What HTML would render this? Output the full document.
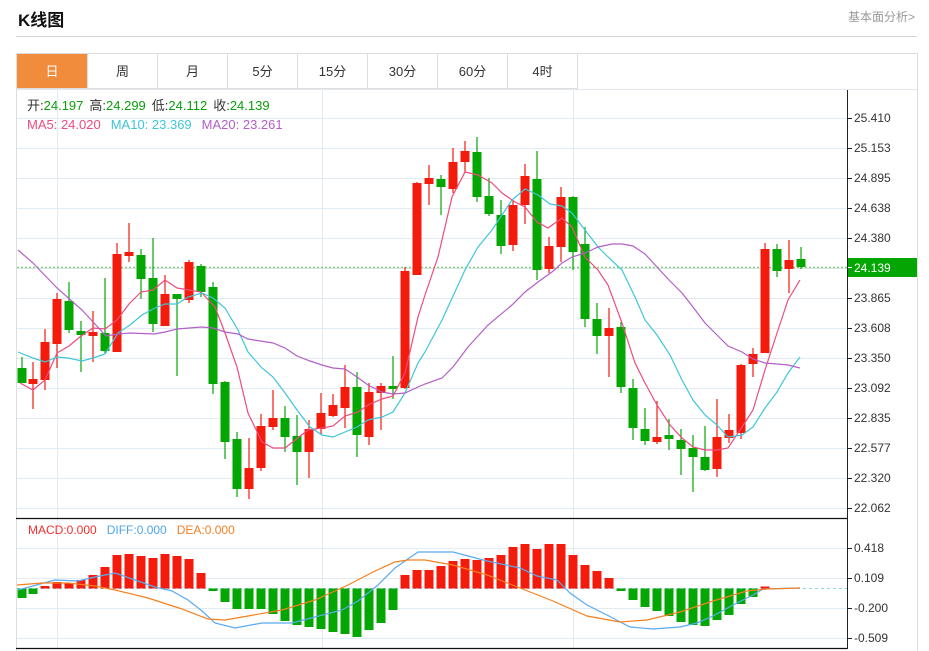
<!DOCTYPE html>
<html><head><meta charset="utf-8">
<style>
*{margin:0;padding:0;box-sizing:border-box}
body{width:929px;height:651px;background:#fff;font-family:"Liberation Sans","Noto Sans CJK SC",sans-serif;position:relative;overflow:hidden;color:#333}
.title{position:absolute;left:18px;top:6px;font-size:17px;font-weight:bold;color:#111}
.more{position:absolute;right:14px;top:8px;font-size:12px;color:#999}
.hr{position:absolute;left:16px;top:36px;width:901px;height:1px;background:#d3d3d3}
.box{position:absolute;left:16px;top:53px;width:902px;height:598px;border:1px solid #ddd;border-bottom:none}
.tab{position:absolute;top:54px;height:35px;width:70px;border-right:1px solid #ddd;border-bottom:1px solid #ddd;font-size:13px;line-height:35px;text-align:center;color:#333}
.tab.on{background:#f28c3d;color:#fff}
svg{position:absolute;left:0;top:0}
</style></head><body>
<div class="title">K线图</div>
<div class="more">基本面分析&gt;</div>
<div class="hr"></div>
<div class="box"></div>
<div class="tab on" style="left:17px;width:71px">日</div>
<div class="tab" style="left:88px">周</div>
<div class="tab" style="left:158px">月</div>
<div class="tab" style="left:228px">5分</div>
<div class="tab" style="left:298px">15分</div>
<div class="tab" style="left:368px">30分</div>
<div class="tab" style="left:438px">60分</div>
<div class="tab" style="left:508px">4时</div>
<div style="position:absolute;left:17px;top:89px;width:900px;height:1px;background:#e2e8ee"></div>
<svg width="929" height="651" xmlns="http://www.w3.org/2000/svg" font-family="Liberation Sans, Noto Sans CJK SC, sans-serif">
<g stroke="#e3ebf2" stroke-width="1">
<line x1="17" y1="118.5" x2="847" y2="118.5"/><line x1="17" y1="148.5" x2="847" y2="148.5"/><line x1="17" y1="178.5" x2="847" y2="178.5"/><line x1="17" y1="208.5" x2="847" y2="208.5"/><line x1="17" y1="238.5" x2="847" y2="238.5"/><line x1="17" y1="268.5" x2="847" y2="268.5"/><line x1="17" y1="298.5" x2="847" y2="298.5"/><line x1="17" y1="328.5" x2="847" y2="328.5"/><line x1="17" y1="358.5" x2="847" y2="358.5"/><line x1="17" y1="388.5" x2="847" y2="388.5"/><line x1="17" y1="418.5" x2="847" y2="418.5"/><line x1="17" y1="448.5" x2="847" y2="448.5"/><line x1="17" y1="478.5" x2="847" y2="478.5"/><line x1="17" y1="508.5" x2="847" y2="508.5"/>
<line x1="57.5" y1="90" x2="57.5" y2="648"/><line x1="322.5" y1="90" x2="322.5" y2="648"/><line x1="573.5" y1="90" x2="573.5" y2="648"/>
<line x1="17" y1="548.5" x2="847" y2="548.5"/><line x1="17" y1="578.5" x2="847" y2="578.5"/><line x1="17" y1="608.5" x2="847" y2="608.5"/><line x1="17" y1="638.5" x2="847" y2="638.5"/>
</g>
<line x1="17" y1="267.5" x2="847" y2="267.5" stroke="#7fcf7f" stroke-width="1.5" stroke-dasharray="2,2"/>
<line x1="17" y1="588.5" x2="847" y2="588.5" stroke="#8fd4e8" stroke-width="1" stroke-dasharray="3,3"/>
<line x1="16" y1="518.5" x2="847" y2="518.5" stroke="#111" stroke-width="1.2"/>
<line x1="16" y1="648.5" x2="847" y2="648.5" stroke="#111" stroke-width="1.2"/>
<line x1="847.5" y1="90" x2="847.5" y2="649" stroke="#222" stroke-width="1"/>
<g stroke="#222"><line x1="847" y1="118.5" x2="852" y2="118.5"/><line x1="847" y1="148.5" x2="852" y2="148.5"/><line x1="847" y1="178.5" x2="852" y2="178.5"/><line x1="847" y1="208.5" x2="852" y2="208.5"/><line x1="847" y1="238.5" x2="852" y2="238.5"/><line x1="847" y1="298.5" x2="852" y2="298.5"/><line x1="847" y1="328.5" x2="852" y2="328.5"/><line x1="847" y1="358.5" x2="852" y2="358.5"/><line x1="847" y1="388.5" x2="852" y2="388.5"/><line x1="847" y1="418.5" x2="852" y2="418.5"/><line x1="847" y1="448.5" x2="852" y2="448.5"/><line x1="847" y1="478.5" x2="852" y2="478.5"/><line x1="847" y1="508.5" x2="852" y2="508.5"/><line x1="847" y1="548.5" x2="852" y2="548.5"/><line x1="847" y1="578.5" x2="852" y2="578.5"/><line x1="847" y1="608.5" x2="852" y2="608.5"/><line x1="847" y1="638.5" x2="852" y2="638.5"/></g>
<g font-size="12" fill="#333">
<text x="854" y="122">25.410</text><text x="854" y="152">25.153</text><text x="854" y="182">24.895</text><text x="854" y="212">24.638</text><text x="854" y="242">24.380</text><text x="854" y="302">23.865</text><text x="854" y="332">23.608</text><text x="854" y="362">23.350</text><text x="854" y="392">23.092</text><text x="854" y="422">22.835</text><text x="854" y="452">22.577</text><text x="854" y="482">22.320</text><text x="854" y="512">22.062</text>
<text x="854" y="552">0.418</text><text x="854" y="582">0.109</text><text x="854" y="612">-0.200</text><text x="854" y="642">-0.509</text>
</g>
<rect x="848" y="258" width="69" height="19" fill="#03a603"/>
<line x1="848" y1="267.5" x2="852" y2="267.5" stroke="#fff"/>
<text x="854" y="272" font-size="12" fill="#fff">24.139</text>
<g font-size="13">
<text x="27" y="110"><tspan fill="#333">开:</tspan><tspan fill="#0a9e0a">24.197</tspan><tspan fill="#333" dx="6">高:</tspan><tspan fill="#0a9e0a">24.299</tspan><tspan fill="#333" dx="6">低:</tspan><tspan fill="#0a9e0a">24.112</tspan><tspan fill="#333" dx="6">收:</tspan><tspan fill="#0a9e0a">24.139</tspan></text>
<text x="27" y="129"><tspan fill="#ef4b7e">MA5: 24.020</tspan><tspan fill="#3fc5da" dx="10">MA10: 23.369</tspan><tspan fill="#b25fc8" dx="10">MA20: 23.261</tspan></text>
</g>
<g font-size="12">
<text x="28" y="534"><tspan fill="#f03030">MACD:0.000</tspan><tspan fill="#4ea6ef" dx="10">DIFF:0.000</tspan><tspan fill="#f57f22" dx="10">DEA:0.000</tspan></text>
</g>
<!-- MACD bars -->
<g fill="#f31b0b">
<rect x="40.5" y="586" width="9" height="2.5"/><rect x="52.5" y="582" width="9" height="6.5"/><rect x="64.5" y="583" width="9" height="5.5"/><rect x="76.5" y="580" width="9" height="8.5"/><rect x="88.5" y="575" width="9" height="13.5"/><rect x="100.5" y="567" width="9" height="21.5"/><rect x="112.5" y="555" width="9" height="33.5"/><rect x="124.5" y="554" width="9" height="34.5"/><rect x="136.5" y="556" width="9" height="32.5"/><rect x="148.5" y="558" width="9" height="30.5"/><rect x="160.5" y="554" width="9" height="34.5"/><rect x="172.5" y="556" width="9" height="32.5"/><rect x="184.5" y="559" width="9" height="29.5"/><rect x="196.5" y="573" width="9" height="15.5"/>
<rect x="400.5" y="575" width="9" height="13.5"/><rect x="412.5" y="570" width="9" height="18.5"/><rect x="424.5" y="570" width="9" height="18.5"/><rect x="436.5" y="566" width="9" height="22.5"/><rect x="448.5" y="561" width="9" height="27.5"/><rect x="460.5" y="559" width="9" height="29.5"/><rect x="472.5" y="560" width="9" height="28.5"/><rect x="484.5" y="558" width="9" height="30.5"/><rect x="496.5" y="555" width="9" height="33.5"/><rect x="508.5" y="547" width="9" height="41.5"/><rect x="520.5" y="544" width="9" height="44.5"/><rect x="532.5" y="549" width="9" height="39.5"/><rect x="544.5" y="544" width="9" height="44.5"/><rect x="556.5" y="544" width="9" height="44.5"/><rect x="568.5" y="555" width="9" height="33.5"/><rect x="580.5" y="565" width="9" height="23.5"/><rect x="592.5" y="571" width="9" height="17.5"/><rect x="604.5" y="578" width="9" height="10.5"/>
<rect x="760.5" y="586.5" width="9" height="2"/>
</g>
<g fill="#03a603">
<rect x="17.5" y="588.5" width="9" height="9.5"/><rect x="28.5" y="588.5" width="9" height="5.5"/>
<rect x="208.5" y="588.5" width="9" height="2.5"/><rect x="220.5" y="588.5" width="9" height="13.5"/><rect x="232.5" y="588.5" width="9" height="20.5"/><rect x="244.5" y="588.5" width="9" height="20.5"/><rect x="256.5" y="588.5" width="9" height="20.5"/><rect x="268.5" y="588.5" width="9" height="25.5"/><rect x="280.5" y="588.5" width="9" height="32.5"/><rect x="292.5" y="588.5" width="9" height="36.5"/><rect x="304.5" y="588.5" width="9" height="38.5"/><rect x="316.5" y="588.5" width="9" height="40.5"/><rect x="328.5" y="588.5" width="9" height="43.5"/><rect x="340.5" y="588.5" width="9" height="45.5"/><rect x="352.5" y="588.5" width="9" height="48.5"/><rect x="364.5" y="588.5" width="9" height="41.5"/><rect x="376.5" y="588.5" width="9" height="34.5"/><rect x="388.5" y="588.5" width="9" height="21.5"/>
<rect x="616.5" y="588.5" width="9" height="2.5"/><rect x="628.5" y="588.5" width="9" height="11.5"/><rect x="640.5" y="588.5" width="9" height="18.5"/><rect x="652.5" y="588.5" width="9" height="22.5"/><rect x="664.5" y="588.5" width="9" height="27.5"/><rect x="676.5" y="588.5" width="9" height="33.5"/><rect x="688.5" y="588.5" width="9" height="36.5"/><rect x="700.5" y="588.5" width="9" height="37.5"/><rect x="712.5" y="588.5" width="9" height="31.5"/><rect x="724.5" y="588.5" width="9" height="26.5"/><rect x="736.5" y="588.5" width="9" height="15.5"/><rect x="748.5" y="588.5" width="9" height="8.5"/>
</g>
<polyline fill="none" stroke="#5aaaf0" stroke-width="1.2" points="18,590 55,580 78,581 95,577 115,573 135,580 155,587 172,591 188,600 202,611 215,623 235,628 262,623 292,623 315,617 342,610 358,601 378,585 395,568 418,552 453,552 487,561 520,568 537,576 557,580 570,593 587,605 607,615 630,627 653,629 680,627 697,623 713,616 733,605 753,595 763,589 800,588"/>
<polyline fill="none" stroke="#f58020" stroke-width="1.2" points="17,585 42,583 68,583 95,586 115,590 148,598 182,609 208,619 225,620 248,616 282,610 315,600 348,585 375,571 395,562 408,560 425,560 453,565 487,575 520,588 553,601 587,616 620,622 647,620 680,612 713,601 747,591 767,589 800,588"/>
<!-- candles -->
<g stroke="#f31b0b" stroke-width="1.2">
<line x1="33" y1="362" x2="33" y2="409"/><line x1="45" y1="329" x2="45" y2="390"/><line x1="57" y1="293" x2="57" y2="368"/><line x1="93" y1="311" x2="93" y2="362"/><line x1="117" y1="243" x2="117" y2="352"/><line x1="129" y1="223" x2="129" y2="262"/><line x1="165" y1="275" x2="165" y2="326"/><line x1="189" y1="260" x2="189" y2="303"/><line x1="249" y1="438" x2="249" y2="499"/><line x1="261" y1="414" x2="261" y2="471"/><line x1="273" y1="390" x2="273" y2="430"/><line x1="309" y1="420" x2="309" y2="478"/><line x1="321" y1="393" x2="321" y2="434"/><line x1="333" y1="394" x2="333" y2="417"/><line x1="345" y1="365" x2="345" y2="428"/><line x1="369" y1="383" x2="369" y2="445"/><line x1="381" y1="383" x2="381" y2="430"/><line x1="405" y1="267" x2="405" y2="389"/><line x1="417" y1="182" x2="417" y2="275"/><line x1="429" y1="165" x2="429" y2="205"/><line x1="453" y1="148" x2="453" y2="193"/><line x1="465" y1="141" x2="465" y2="173"/><line x1="513" y1="200" x2="513" y2="251"/><line x1="525" y1="164" x2="525" y2="224"/><line x1="549" y1="237" x2="549" y2="273"/><line x1="561" y1="187" x2="561" y2="262"/><line x1="609" y1="308" x2="609" y2="377"/><line x1="657" y1="401" x2="657" y2="444"/><line x1="717" y1="399" x2="717" y2="477"/><line x1="729" y1="414" x2="729" y2="443"/><line x1="741" y1="364" x2="741" y2="439"/><line x1="753" y1="348" x2="753" y2="377"/><line x1="765" y1="243" x2="765" y2="353"/><line x1="789" y1="240" x2="789" y2="293"/>
</g>
<g fill="#f31b0b">
<rect x="28.5" y="379" width="9" height="5"/><rect x="40.5" y="342" width="9" height="38"/><rect x="52.5" y="299" width="9" height="45"/><rect x="88.5" y="332" width="9" height="4"/><rect x="112.5" y="254" width="9" height="98"/><rect x="124.5" y="252" width="9" height="4"/><rect x="160.5" y="294" width="9" height="32"/><rect x="184.5" y="262" width="9" height="38"/><rect x="244.5" y="468" width="9" height="21"/><rect x="256.5" y="426" width="9" height="42"/><rect x="268.5" y="418" width="9" height="9"/><rect x="304.5" y="429" width="9" height="23"/><rect x="316.5" y="413" width="9" height="16"/><rect x="328.5" y="405" width="9" height="11"/><rect x="340.5" y="387" width="9" height="21"/><rect x="364.5" y="392" width="9" height="45"/><rect x="376.5" y="386" width="9" height="7"/><rect x="400.5" y="271" width="9" height="117"/><rect x="412.5" y="183" width="9" height="92"/><rect x="424.5" y="178" width="9" height="6"/><rect x="448.5" y="162" width="9" height="27"/><rect x="460.5" y="151" width="9" height="11"/><rect x="508.5" y="205" width="9" height="40"/><rect x="520.5" y="176" width="9" height="29"/><rect x="544.5" y="246" width="9" height="23"/><rect x="556.5" y="197" width="9" height="50"/><rect x="604.5" y="328" width="9" height="8"/><rect x="652.5" y="437" width="9" height="5"/><rect x="712.5" y="437" width="9" height="32"/><rect x="724.5" y="430" width="9" height="8"/><rect x="736.5" y="365" width="9" height="68"/><rect x="748.5" y="354" width="9" height="10"/><rect x="760.5" y="249" width="9" height="104"/><rect x="784.5" y="260" width="9" height="9"/>
</g>
<g stroke="#03a603" stroke-width="1.2">
<line x1="22" y1="357" x2="22" y2="383"/><line x1="69" y1="282" x2="69" y2="333"/><line x1="81" y1="321" x2="81" y2="372"/><line x1="105" y1="278" x2="105" y2="353"/><line x1="141" y1="249" x2="141" y2="299"/><line x1="153" y1="238" x2="153" y2="332"/><line x1="177" y1="294" x2="177" y2="376"/><line x1="201" y1="264" x2="201" y2="297"/><line x1="213" y1="282" x2="213" y2="394"/><line x1="225" y1="381" x2="225" y2="459"/><line x1="237" y1="432" x2="237" y2="497"/><line x1="285" y1="406" x2="285" y2="452"/><line x1="297" y1="415" x2="297" y2="485"/><line x1="357" y1="372" x2="357" y2="457"/><line x1="393" y1="356" x2="393" y2="399"/><line x1="441" y1="175" x2="441" y2="215"/><line x1="477" y1="137" x2="477" y2="202"/><line x1="489" y1="178" x2="489" y2="216"/><line x1="501" y1="200" x2="501" y2="254"/><line x1="537" y1="151" x2="537" y2="280"/><line x1="573" y1="196" x2="573" y2="270"/><line x1="585" y1="227" x2="585" y2="327"/><line x1="597" y1="303" x2="597" y2="354"/><line x1="621" y1="322" x2="621" y2="393"/><line x1="633" y1="379" x2="633" y2="440"/><line x1="645" y1="408" x2="645" y2="445"/><line x1="669" y1="419" x2="669" y2="450"/><line x1="681" y1="429" x2="681" y2="475"/><line x1="693" y1="435" x2="693" y2="492"/><line x1="705" y1="426" x2="705" y2="471"/><line x1="777" y1="244" x2="777" y2="277"/><line x1="801" y1="247" x2="801" y2="269"/>
</g>
<g fill="#03a603">
<rect x="17.5" y="368" width="9" height="15"/><rect x="64.5" y="301" width="9" height="29"/><rect x="76.5" y="331" width="9" height="4"/><rect x="100.5" y="333" width="9" height="18"/><rect x="136.5" y="255" width="9" height="24"/><rect x="148.5" y="278" width="9" height="46"/><rect x="172.5" y="294" width="9" height="5"/><rect x="196.5" y="266" width="9" height="26"/><rect x="208.5" y="287" width="9" height="97"/><rect x="220.5" y="382" width="9" height="60"/><rect x="232.5" y="439" width="9" height="50"/><rect x="280.5" y="418" width="9" height="19"/><rect x="292.5" y="436" width="9" height="16"/><rect x="352.5" y="387" width="9" height="48"/><rect x="388.5" y="386" width="9" height="3"/><rect x="436.5" y="179" width="9" height="8"/><rect x="472.5" y="152" width="9" height="45"/><rect x="484.5" y="196" width="9" height="18"/><rect x="496.5" y="215" width="9" height="31"/><rect x="532.5" y="179" width="9" height="91"/><rect x="568.5" y="197" width="9" height="55"/><rect x="580.5" y="244" width="9" height="75"/><rect x="592.5" y="319" width="9" height="17"/><rect x="616.5" y="327" width="9" height="60"/><rect x="628.5" y="388" width="9" height="40"/><rect x="640.5" y="429" width="9" height="12"/><rect x="664.5" y="435" width="9" height="4"/><rect x="676.5" y="440" width="9" height="9"/><rect x="688.5" y="448" width="9" height="9"/><rect x="700.5" y="457" width="9" height="13"/><rect x="772.5" y="249" width="9" height="22"/><rect x="796.5" y="259" width="9" height="8"/>
</g>
<!-- MA lines -->
<polyline fill="none" stroke="#ef4b7e" stroke-width="1.2" points="20,383 33,390 45,380 57,353 69,346 81,336 93,328 105,329 117,320 129,304 141,292 153,290 165,280 177,288 189,290 201,292 215,307 225,333 237,367 248,413 262,442 273,448 285,448 308,430 322,428 333,426 345,416 358,412 368,405 382,399 393,396 405,373 418,317 425,295 438,257 452,197 465,172 478,175 492,183 502,193 515,202 525,207 537,222 548,228 562,218 572,227 585,257 598,270 608,285 622,323 635,363 645,383 657,405 670,425 682,438 693,447 705,450 717,450 728,448 742,427 753,410 765,370 777,333 788,300 800,280"/>
<polyline fill="none" stroke="#3fc5da" stroke-width="1.2" points="18,352 33,358 45,362 57,357 68,358 82,361 93,358 105,354 118,333 130,325 142,315 153,309 165,304 177,304 188,297 202,293 213,298 225,308 238,330 248,352 262,368 273,377 285,393 297,410 310,427 322,435 333,437 345,432 357,427 368,420 382,417 393,412 405,393 418,363 425,352 442,320 465,270 478,247 492,230 512,200 525,189 538,195 550,204 562,206 572,213 585,230 598,247 608,257 622,270 635,297 645,320 657,335 670,355 682,380 693,400 705,415 717,425 728,437 742,435 753,427 765,408 777,392 788,373 800,357"/>
<polyline fill="none" stroke="#b25fc8" stroke-width="1.2" points="18,250 33,263 57,288 82,310 106,336 118,334 130,333 154,334 165,332 177,329 202,327 213,328 225,332 238,334 248,339 273,343 285,348 297,356 310,361 322,365 333,368 345,369 357,377 368,385 382,392 393,394 405,393 418,387 425,384 442,378 453,367 468,347 488,325 512,305 525,292 538,282 552,272 562,263 572,257 585,253 598,247 612,244 622,244 633,246 645,254 657,267 670,281 682,293 693,307 705,323 717,335 728,346 742,352 753,359 765,363 777,364 788,365 800,368"/>
</svg>
</body></html>
